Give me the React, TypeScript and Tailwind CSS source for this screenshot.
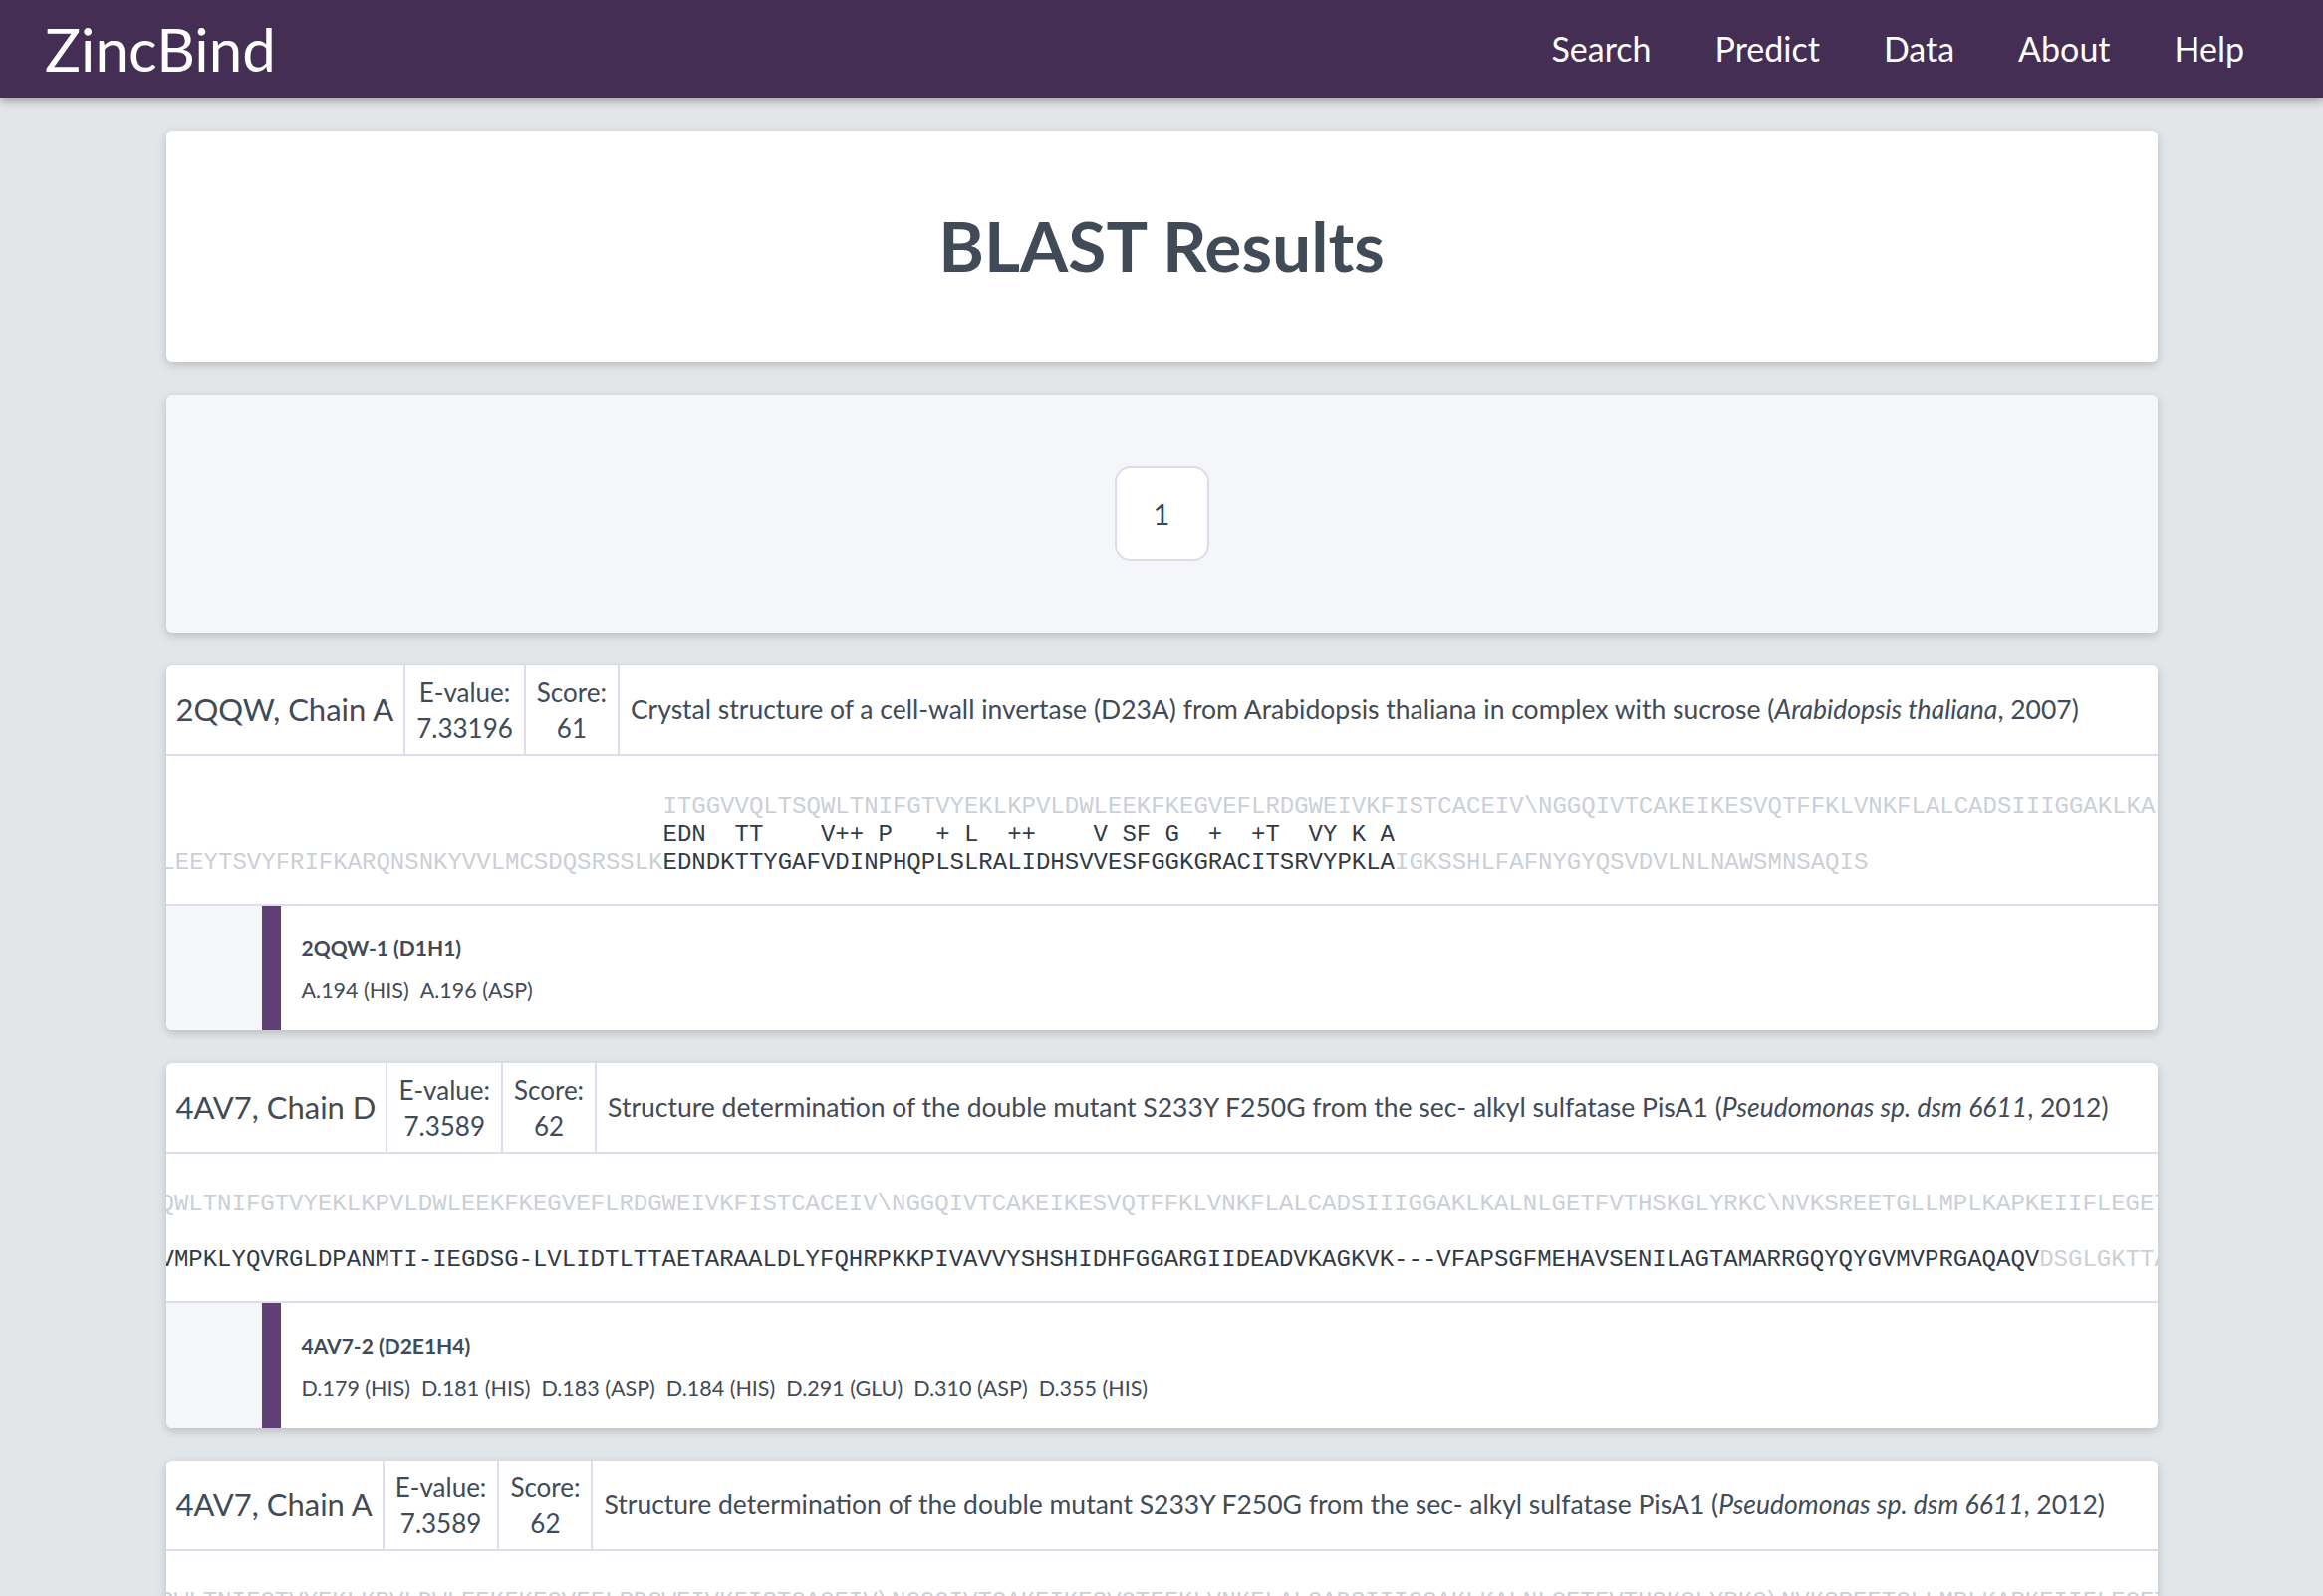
import React from 'react';

type Seg = { text: string; dim?: boolean };
type Row = { left: Seg[]; mid: Seg[] };

type Result = {
  name: string;
  evalue: string;
  score: string;
  desc: string;
  species: string;
  year: string;
  lead: string;
  rows: Row[];
  site: { title: string; residues: string[] };
};

const QUERY =
  'ITGGVVQLTSQWLTNIFGTVYEKLKPVLDWLEEKFKEGVEFLRDGWEIVKFISTCACEIV\\NGGQIVTCAKEIKESVQTFFKLVNKFLALCADSIIIGGAKLKALNLGETFVTHSKGLYRKC\\NVKSREETGLLMPLKAPKEIIFLEGETYLVKSDGRNLQFEAGSK';

const pisRows: Row[] = [
  { left: [{ text: 'ITGGVVQLTS', dim: true }], mid: [{ text: QUERY.slice(10), dim: true }] },
  { left: [], mid: [{ text: ' ' }] },
  {
    left: [],
    mid: [
      {
        text: 'VMPKLYQVRGLDPANMTI-IEGDSG-LVLIDTLTTAETARAALDLYFQHRPKKPIVAVVYSHSHIDHFGGARGIIDEADVKAGKVK---VFAPSGFMEHAVSENILAGTAMARRGQYQYGVMVPRGAQAQV',
      },
      { text: 'DSGLGKTTAYLNKRSPLEGTQWVA', dim: true },
    ],
  },
];

const results: Result[] = [
  {
    name: '2QQW, Chain A',
    evalue: '7.33196',
    score: '61',
    desc: 'Crystal structure of a cell-wall invertase (D23A) from Arabidopsis thaliana in complex with sucrose',
    species: 'Arabidopsis thaliana',
    year: '2007',
    lead: 'w-[499px]',
    rows: [
      { left: [], mid: [{ text: QUERY, dim: true }] },
      { left: [], mid: [{ text: 'EDN  TT    V++ P   + L  ++    V SF G  +  +T  VY K A' }] },
      {
        left: [{ text: 'LEEYTSVYFRIFKARQNSNKYVVLMCSDQSRSSLK', dim: true }],
        mid: [
          { text: 'EDNDKTTYGAFVDINPHQPLSLRALIDHSVVESFGGKGRACITSRVYPKLA' },
          { text: 'IGKSSHLFAFNYGYQSVDVLNLNAWSMNSAQIS', dim: true },
        ],
      },
    ],
    site: { title: '2QQW-1 (D1H1)', residues: ['A.194 (HIS)', 'A.196 (ASP)'] },
  },
  {
    name: '4AV7, Chain D',
    evalue: '7.3589',
    score: '62',
    desc: 'Structure determination of the double mutant S233Y F250G from the sec- alkyl sulfatase PisA1',
    species: 'Pseudomonas sp. dsm 6611',
    year: '2012',
    lead: 'w-0 ml-[-6px]',
    rows: pisRows,
    site: {
      title: '4AV7-2 (D2E1H4)',
      residues: ['D.179 (HIS)', 'D.181 (HIS)', 'D.183 (ASP)', 'D.184 (HIS)', 'D.291 (GLU)', 'D.310 (ASP)', 'D.355 (HIS)'],
    },
  },
  {
    name: '4AV7, Chain A',
    evalue: '7.3589',
    score: '62',
    desc: 'Structure determination of the double mutant S233Y F250G from the sec- alkyl sulfatase PisA1',
    species: 'Pseudomonas sp. dsm 6611',
    year: '2012',
    lead: 'w-0 ml-[-6px]',
    rows: pisRows,
    site: {
      title: '4AV7-1 (D2E1H4)',
      residues: ['A.179 (HIS)', 'A.181 (HIS)', 'A.183 (ASP)', 'A.184 (HIS)', 'A.291 (GLU)', 'A.310 (ASP)', 'A.355 (HIS)'],
    },
  },
];

function Segs({ segs }: { segs: Seg[] }) {
  return (
    <>
      {segs.map((s, i) => (
        <span key={i} className={s.dim ? 'text-[#cbcfd6]' : 'text-[#323a45]'}>
          {s.text}
        </span>
      ))}
    </>
  );
}

function ResultCard({ r }: { r: Result }) {
  return (
    <div className="bg-white rounded-[6px] overflow-hidden shadow-[0_3px_10px_rgba(0,0,0,0.18)]">
      <div className="flex h-[91px] border-b-2 border-[#dfddee]">
        <div className="flex items-center px-[10px] border-r-2 border-[#dfddee] text-[31px] whitespace-nowrap">
          {r.name}
        </div>
        <div className="flex flex-col justify-center items-center px-[11px] border-r-2 border-[#dfddee] text-[26px] leading-[36px]">
          <div>E-value:</div>
          <div>{r.evalue}</div>
        </div>
        <div className="flex flex-col justify-center items-center px-[11px] border-r-2 border-[#dfddee] text-[26px] leading-[36px]">
          <div>Score:</div>
          <div>{r.score}</div>
        </div>
        <div className="flex-1 flex items-center px-[11px] text-[26.5px] whitespace-nowrap">
          <span>
            {r.desc} (<i>{r.species}</i>, {r.year})
          </span>
        </div>
      </div>

      <div className="overflow-hidden pt-[37px] pb-[27px] border-b-2 border-[#dfddee] font-['Liberation_Mono',monospace] text-[24px] leading-[28px]">
        <div className="flex">
          <div className={`${r.lead} shrink-0 flex flex-col items-end`}>
            {r.rows.map((row, i) => (
              <div key={i} className="whitespace-pre h-[28px]">
                <Segs segs={row.left} />
              </div>
            ))}
          </div>
          <div className="flex flex-col">
            {r.rows.map((row, i) => (
              <div key={i} className="whitespace-pre h-[28px]">
                <Segs segs={row.mid} />
              </div>
            ))}
          </div>
        </div>
      </div>

      <div className="flex h-[125px]">
        <div className="w-[96px] bg-[#f5f6fa]" />
        <div className="w-[19px] bg-[#5f3f75]" />
        <div className="pl-[21px] pt-[28px]">
          <div className="text-[21px] leading-[30px] font-bold">{r.site.title}</div>
          <div className="mt-[12px] flex gap-[11px] text-[21.5px] leading-[30px]">
            {r.site.residues.map((x) => (
              <span key={x}>{x}</span>
            ))}
          </div>
        </div>
      </div>
    </div>
  );
}

export default function App() {
  const nav = ['Search', 'Predict', 'Data', 'About', 'Help'];
  return (
    <div className="min-h-screen bg-[#e2e6e9] font-['Lato',sans-serif] text-[#414b57]">
      <header className="relative z-10 h-[98px] bg-[#452e53] flex items-center justify-between pl-[45px] pr-[79px] shadow-[0_3px_8px_rgba(0,0,0,0.3)]">
        <div className="text-white text-[60px] leading-none">ZincBind</div>
        <nav className="flex gap-[64px] text-white text-[34px]">
          {nav.map((n) => (
            <a key={n} href="#" className="leading-none">
              {n}
            </a>
          ))}
        </nav>
      </header>

      <main className="w-[1999px] mx-auto pt-[33px] pb-[33px] flex flex-col gap-[33px]">
        <div className="h-[232px] bg-white rounded-[6px] flex items-center justify-center shadow-[0_3px_10px_rgba(0,0,0,0.18)]">
          <h1 className="text-[69.5px] font-bold leading-none">BLAST Results</h1>
        </div>

        <div className="h-[239px] bg-[#f5f6fa] rounded-[6px] flex items-center justify-center shadow-[0_3px_10px_rgba(0,0,0,0.18)]">
          <button className="w-[95px] h-[95px] rounded-[16px] border-2 border-[#dddaee] bg-white text-[29px] text-[#3b4450]">
            1
          </button>
        </div>

        {results.map((r, i) => (
          <ResultCard key={i} r={r} />
        ))}
      </main>
    </div>
  );
}
